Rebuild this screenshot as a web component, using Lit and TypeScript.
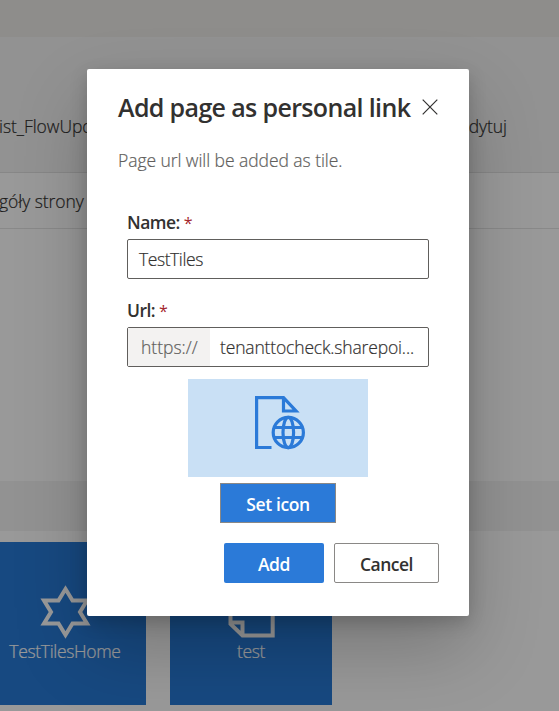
import { LitElement, html, css, svg } from "lit";
import { customElement } from "lit/decorators.js";

const starIcon = svg`<path d="M25.500 4 32.500 15.500H47L40 27 47 38.500H32.500L25.500 50 18.500 38.500H4L11 27 4 15.500H18.500Z" />`;
const pageIcon = svg`<path d="M4.500 2H46.700V50.500H16.500L4.500 39ZM4.500 37.500H16.500V50.500" />`;

@customElement("site-page")
export class SitePage extends LitElement {
  static styles = css`
    :host { display: flex; flex-direction: column; height: 711px; background: #fff; color: #323130; }
    .suite { height: 37px; background: #edebe8; }
    .header { height: 136px; background: #f3f3f3; border-bottom: 1px solid #e2e2e2; display: flex;
      justify-content: space-between; box-sizing: border-box; padding: 78px 52px 0 0; line-height: 22px; }
    .commands { box-sizing: border-box; height: 56px; border-bottom: 1px solid #e4e4e4; padding-top: 17px; line-height: 22px; }
    .label { font-size: 17.5px; font-weight: 300; -webkit-text-stroke: 0.2px currentColor; letter-spacing: -0.05px; white-space: nowrap; }
    .commands .label { margin-left: -1px; }
    .header .label.first { margin-left: -1px; }
    .section { margin-top: 252px; height: 50px; background: #f3f3f3; }
    .tiles { display: flex; gap: 24px; margin: 11px 0 0 -16px; }
    .tile { width: 162px; height: 163px; background: #277ad8; color: #fff; display: flex; flex-direction: column;
      align-items: center; box-sizing: border-box; padding-top: 43px; }
    .tile svg { width: 51px; height: 54px; fill: none; stroke: #fff; stroke-width: 4; }
    .tile .label { line-height: 25px; letter-spacing: -0.33px; }
  `;
  render() {
    return html`
      <div class="suite"></div>
      <div class="header"><span class="label first">ist_FlowUpd</span><span class="label">Edytuj</span></div>
      <div class="commands"><span class="label">góły strony</span></div>
      <div class="section"></div>
      <div class="tiles">
        <div class="tile"><svg viewBox="0 0 51 54">${starIcon}</svg><span class="label">TestTilesHome</span></div>
        <div class="tile"><svg viewBox="0 0 51 54">${pageIcon}</svg><span class="label">test</span></div>
      </div>`;
  }
}

@customElement("link-dialog")
export class LinkDialog extends LitElement {
  static styles = css`
    :host { display: block; box-sizing: border-box; width: 382px; height: 547px; background: #fff; border-radius: 2px;
      padding: 23px 30px 0 30px; color: #323130; font-size: 17.5px; font-weight: 300; letter-spacing: -0.06px;
      box-shadow: 0 32px 72px rgba(0,0,0,.22), 0 6px 18px rgba(0,0,0,.18); }
    .head { display: flex; align-items: center; justify-content: space-between; height: 30px; }
    .title { font-size: 25px; font-weight: 600; letter-spacing: -0.64px; white-space: nowrap; line-height: 28px; margin: -1px 0 0 1px; }
    .close { width: 16px; height: 16px; margin-right: 1px; stroke: #323130; stroke-width: 1.2; fill: none; }
    .sub, .prefix, .value { -webkit-text-stroke: 0.2px currentColor; }
    .sub { color: #605e5c; line-height: 24px; margin-top: 26px; padding-left: 1px; white-space: nowrap; }
    .fields { padding: 0 10px; margin-top: 38px; }
    .caption { font-weight: 600; line-height: 24px; height: 29px; letter-spacing: -0.55px; }
    .req { color: #a4262c; font-weight: 400; font-size: 16px; }
    .box { display: flex; box-sizing: border-box; height: 40px; border: 1px solid #605e5c; border-radius: 2px; line-height: 39px;
      margin-bottom: 19px; }
    .prefix { width: 82px; height: 38px; box-sizing: border-box; padding-left: 13px; background: #f3f2f1; color: #605e5c; letter-spacing: 0; }
    .value { padding-left: 11px; white-space: nowrap; letter-spacing: -0.42px; }
    .url { padding-left: 10px; letter-spacing: -0.16px; }
    .preview { width: 180px; height: 98px; background: #c9e0f5; margin: -7px 0 0 71px; display: flex; justify-content: center;
      box-sizing: border-box; padding: 17px 0 0 4px; }
    .preview svg { width: 50px; height: 54px; fill: none; stroke: #2b7ad8; stroke-width: 3.2; }
    .btn { box-sizing: border-box; height: 40px; text-align: center; font-weight: 600; border-radius: 2px; letter-spacing: -0.4px; }
    .primary { background: #2b7ad8; color: #fff; }
    .set { width: 116px; margin: 6px 0 0 103px; border: 1px solid #8a8886; border-radius: 0; line-height: 41px; }
    .actions { display: flex; justify-content: flex-end; gap: 10px; margin-top: 20px; }
    .add { width: 100px; line-height: 43px; }
    .cancel { width: 105px; border: 1px solid #8a8886; line-height: 41px; letter-spacing: -0.5px; }
  `;
  render() {
    return html`
      <div class="head">
        <span class="title">Add page as personal link</span>
        <svg class="close" viewBox="0 0 16 16"><path d="M.7.7l14.600 14.600M15.300.7l-14.600 14.600" /></svg>
      </div>
      <div class="sub">Page url will be added as tile.</div>
      <div class="fields">
        <div class="caption">Name: <span class="req">*</span></div>
        <div class="box"><span class="value">TestTiles</span></div>
        <div class="caption">Url: <span class="req">*</span></div>
        <div class="box"><span class="prefix">https://</span><span class="value url">tenanttocheck.sharepoi...</span></div>
      </div>
      <div class="preview">
        <svg viewBox="0 0 50 54">
          <path d="M16.500 51.500H1.600V1.600H28.500L41 15H28.500V1.600" />
          <circle cx="33.300" cy="36.500" r="15.100" />
          <ellipse cx="33.300" cy="36.500" rx="5.300" ry="15.100" />
          <path d="M19.500 31.500H47M19.500 41.500H47" />
        </svg>
      </div>
      <div class="btn primary set">Set icon</div>
      <div class="actions"><div class="btn primary add">Add</div><div class="btn cancel">Cancel</div></div>`;
  }
}

@customElement("app-root")
export class AppRoot extends LitElement {
  static styles = css`
    :host { display: block; position: relative; width: 559px; height: 711px; overflow: hidden;
      font-family: "Open Sans", "Noto Sans", sans-serif; }
    .overlay { position: absolute; inset: 0; background: rgba(0,0,0,.4); padding: 69px 0 0 87px; }
  `;
  render() {
    return html`<site-page></site-page><div class="overlay"><link-dialog></link-dialog></div>`;
  }
}
